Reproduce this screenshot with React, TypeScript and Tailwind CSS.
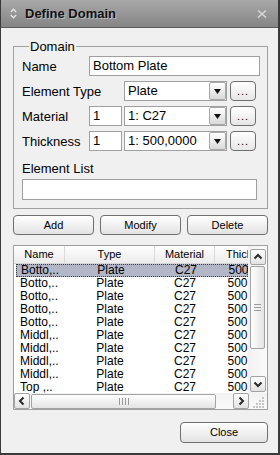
import React from "react";

function Btn({ children, className }: { children: React.ReactNode; className: string }) {
  return (
    <div
      className={
        "h-[20px] rounded-[4px] border border-[#6f6f6f] bg-linear-to-b from-white to-[#e3e3e3] text-[11px] text-black flex items-center justify-center " +
        className
      }
    >
      {children}
    </div>
  );
}

function Dots() {
  return (
    <div className="w-[26px] h-[20px] rounded-[4px] border border-[#6f6f6f] bg-linear-to-b from-white to-[#e6e6e6] flex items-end justify-center pb-[3px]">
      <span className="text-[11px] leading-[11px] tracking-[1px]">...</span>
    </div>
  );
}

function Select({ value }: { value: string }) {
  return (
    <div className="w-[103px] h-[20px] border border-[#a0a0a0] bg-white flex">
      <div className="flex-1 pl-[3px] text-[13px] leading-[18px] whitespace-nowrap overflow-hidden">{value}</div>
      <div className="w-[17px] h-[18px] rounded-[2px] border border-[#a8a8a8] bg-linear-to-b from-white to-[#d9d9d9] flex items-center justify-center">
        <svg width="7" height="5" viewBox="0 0 7 5">
          <path d="M0 0 H7 L3.5 5 Z" fill="#111" />
        </svg>
      </div>
    </div>
  );
}

function Chevron({ dir }: { dir: "up" | "down" | "left" | "right" }) {
  const d =
    dir === "up"
      ? "M1.5 6.5 L5 3 L8.5 6.5"
      : dir === "down"
      ? "M1.5 3.5 L5 7 L8.5 3.5"
      : dir === "left"
      ? "M6.5 1.5 L3 5 L6.5 8.5"
      : "M3.5 1.5 L7 5 L3.5 8.5";
  return (
    <svg width="10" height="10" viewBox="0 0 10 10">
      <path d={d} fill="none" stroke="#2a2a2a" strokeWidth="2" />
    </svg>
  );
}

function ArrowBox({ dir }: { dir: "up" | "down" | "left" | "right" }) {
  return (
    <div className="w-[16px] h-[16px] rounded-[2px] border border-[#a3a3a3] bg-linear-to-b from-white to-[#e2e2e2] flex items-center justify-center">
      <Chevron dir={dir} />
    </div>
  );
}

const rows: [string, string, string, string][] = [
  ["Botto,..", "Plate", "C27", "500,0000"],
  ["Botto,..", "Plate", "C27", "500,0000"],
  ["Botto,..", "Plate", "C27", "500,0000"],
  ["Botto,..", "Plate", "C27", "500,0000"],
  ["Botto,..", "Plate", "C27", "500,0000"],
  ["Middl,..", "Plate", "C27", "500,0000"],
  ["Middl,..", "Plate", "C27", "500,0000"],
  ["Middl,..", "Plate", "C27", "500,0000"],
  ["Middl,..", "Plate", "C27", "500,0000"],
  ["Top ,..", "Plate", "C27", "500,0000"],
];

export default function App() {
  return (
    <div className="w-[280px] h-[455px] bg-[#f0f0f0] border-l border-r-2 border-b-2 border-[#3a3a3a] font-['Liberation_Sans',Arial,sans-serif] text-black flex flex-col overflow-hidden">
      {/* Title bar */}
      <div className="h-[28px] shrink-0 flex items-center bg-linear-to-b from-[#a8a8a8] to-[#858585] border-b border-[#5c5c5c]">
        <svg className="ml-[9px]" width="7" height="11" viewBox="0 0 7 11">
          <path d="M0.8 4 L3.5 1.3 L6.2 4" fill="none" stroke="#e4e4e4" strokeWidth="1.4" />
          <path d="M0.8 7 L3.5 9.7 L6.2 7" fill="none" stroke="#e4e4e4" strokeWidth="1.4" />
        </svg>
        <span className="ml-[8px] text-[13px] font-bold text-[#111] [text-shadow:1px_1px_0_#bdbdbd]">Define Domain</span>
        <svg className="ml-auto mr-[11px]" width="10" height="8" viewBox="0 0 10 8">
          <path d="M1 0.5 L9 7.5 M9 0.5 L1 7.5" stroke="#d6d6d6" strokeWidth="1.6" />
        </svg>
      </div>

      <div className="pl-[12px] pr-[10px] flex flex-col">
        {/* Domain group */}
        <fieldset className="mt-[11px] border border-[#a0a0a0] pl-[8px] pt-[2px] pb-[8px]">
          <legend className="ml-[7px] px-[1px] text-[13px] leading-[15px]">Domain</legend>
          <div className="flex flex-col gap-[5px]">
            <div className="flex items-center h-[20px]">
              <div className="w-[67px] text-[13px] leading-[15px]">Name</div>
              <div className="w-[171px] h-[20px] border border-[#a0a0a0] bg-white pl-[3px] text-[13px] leading-[18px]">Bottom Plate</div>
            </div>
            <div className="flex items-center h-[20px]">
              <div className="w-[102px] text-[13px] leading-[15px]">Element Type</div>
              <Select value="Plate" />
              <div className="ml-[3px]">
                <Dots />
              </div>
            </div>
            <div className="flex items-center h-[20px]">
              <div className="w-[67px] text-[13px] leading-[15px]">Material</div>
              <div className="w-[33px] h-[20px] border border-[#a0a0a0] bg-white pl-[3px] text-[13px] leading-[18px]">1</div>
              <div className="ml-[2px]">
                <Select value="1: C27" />
              </div>
              <div className="ml-[3px]">
                <Dots />
              </div>
            </div>
            <div className="flex items-center h-[20px]">
              <div className="w-[67px] text-[13px] leading-[15px]">Thickness</div>
              <div className="w-[33px] h-[20px] border border-[#a0a0a0] bg-white pl-[3px] text-[13px] leading-[18px]">1</div>
              <div className="ml-[2px]">
                <Select value="1: 500,0000" />
              </div>
              <div className="ml-[3px]">
                <Dots />
              </div>
            </div>
          </div>
          <div className="mt-[10px] text-[13px] leading-[15px]">Element List</div>
          <div className="mt-[3px] w-[235px] h-[21px] border border-[#a0a0a0] bg-white"></div>
        </fieldset>

        {/* Buttons */}
        <div className="mt-[6px] grid grid-cols-3 gap-[6px]">
          <Btn className="">Add</Btn>
          <Btn className="">Modify</Btn>
          <Btn className="">Delete</Btn>
        </div>

        {/* List */}
        <div className="mt-[10px] w-[255px] h-[165px] border border-[#a0a0a0] bg-white flex flex-col">
          <div className="flex h-[147px]">
            <div className="flex-1 overflow-hidden flex flex-col">
              <div className="h-[18px] shrink-0 flex bg-linear-to-b from-white to-[#ebebeb] border-b border-[#d5d5d5] text-[11px] leading-[17px] whitespace-nowrap">
                <div className="w-[51px] shrink-0 text-center border-r border-[#dadada]">Name</div>
                <div className="w-[90px] shrink-0 text-center border-r border-[#dadada]">Type</div>
                <div className="w-[60px] shrink-0 text-center border-r border-[#dadada]">Material</div>
                <div className="w-[75px] shrink-0 pl-[11px]">Thickness</div>
              </div>
              <div className="flex-1 overflow-hidden pl-[2px]">
                {rows.map((r, i) => (
                  <div
                    key={i}
                    className={
                      i === 0
                        ? "h-[13px] flex whitespace-nowrap text-[12px] leading-[11px] bg-[#b3b6c6] border border-dotted border-[#3a3a3a]"
                        : "h-[13px] flex whitespace-nowrap text-[12px] leading-[13px]"
                    }
                  >
                    <div className="w-[49px] shrink-0 pl-[4px]">{r[0]}</div>
                    <div className="w-[90px] shrink-0 text-center">{r[1]}</div>
                    <div className="w-[60px] shrink-0 text-center">{r[2]}</div>
                    <div className="w-[75px] shrink-0 text-center">{r[3]}</div>
                  </div>
                ))}
              </div>
            </div>
            {/* vertical scrollbar */}
            <div className="w-[19px] shrink-0 flex flex-col items-center pt-[3px] pb-[1px] bg-linear-to-r from-[#f2f2f2] to-[#fafafa]">
              <ArrowBox dir="up" />
              <div className="mt-[1px] w-[15px] h-[83px] rounded-[2px] border border-[#a3a3a3] bg-linear-to-r from-white to-[#e4e4e4] flex flex-col items-center justify-center gap-[2px]">
                <div className="w-[7px] h-[1px] bg-[#9a9a9a]" />
                <div className="w-[7px] h-[1px] bg-[#9a9a9a]" />
                <div className="w-[7px] h-[1px] bg-[#9a9a9a]" />
              </div>
              <div className="flex-1" />
              <ArrowBox dir="down" />
            </div>
          </div>
          {/* horizontal scrollbar */}
          <div className="h-[16px] flex items-center bg-linear-to-b from-[#f2f2f2] to-[#fafafa]">
            <ArrowBox dir="left" />
            <div className="ml-[1px] w-[185px] h-[15px] rounded-[2px] border border-[#a3a3a3] bg-linear-to-b from-white to-[#e4e4e4] flex items-center justify-center gap-[2px]">
              <div className="w-[1px] h-[7px] bg-[#9a9a9a]" />
              <div className="w-[1px] h-[7px] bg-[#9a9a9a]" />
              <div className="w-[1px] h-[7px] bg-[#9a9a9a]" />
              <div className="w-[1px] h-[7px] bg-[#9a9a9a]" />
            </div>
            <div className="flex-1" />
            <ArrowBox dir="right" />
            <div className="w-[18px] h-[16px] flex items-end justify-end pr-[2px] pb-[1px]">
              <svg width="12" height="12" viewBox="0 0 12 12">
                <g fill="#c4c4c4">
                  <rect x="9" y="1" width="2" height="2" />
                  <rect x="6" y="4" width="2" height="2" />
                  <rect x="9" y="4" width="2" height="2" />
                  <rect x="3" y="7" width="2" height="2" />
                  <rect x="6" y="7" width="2" height="2" />
                  <rect x="9" y="7" width="2" height="2" />
                  <rect x="0" y="10" width="2" height="2" />
                  <rect x="3" y="10" width="2" height="2" />
                  <rect x="6" y="10" width="2" height="2" />
                  <rect x="9" y="10" width="2" height="2" />
                </g>
              </svg>
            </div>
          </div>
        </div>

        {/* Close */}
        <div className="mt-[12px] flex justify-end">
          <Btn className="w-[88px] h-[21px]">Close</Btn>
        </div>
      </div>
    </div>
  );
}
